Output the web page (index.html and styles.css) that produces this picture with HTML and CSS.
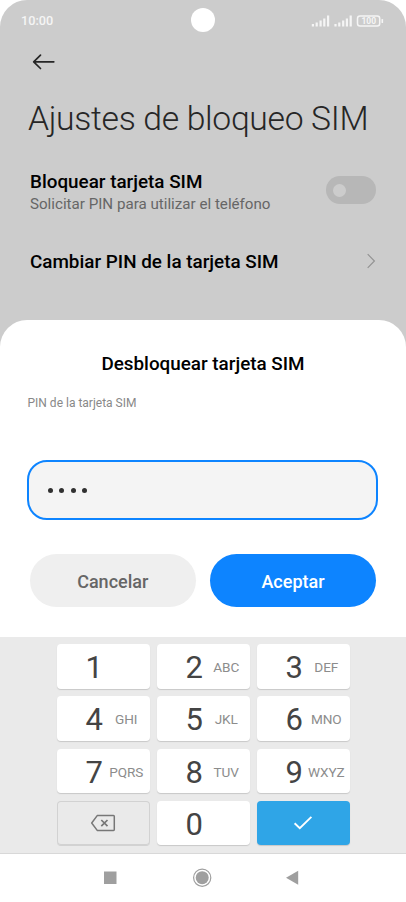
FILE: index.html
```html
<!DOCTYPE html>
<html lang="es">
<head>
<meta charset="utf-8">
<title>Ajustes de bloqueo SIM</title>
<link rel="stylesheet" href="styles.css">
</head>
<body>
<main class="phone">
  <section class="settings">
    <header class="status">
      <span class="clock">10:00</span>
      <span class="camera"></span>
      <svg class="indicators" width="74" height="14" viewBox="0 0 74 14">
        <g fill="#f5f5f5">
          <path d="M.8 10h2.200v2.500h-2.200zM4.600 8.500h2.200v4h-2.200zM8.500 6.500h2.200v6h-2.200zM12.200 4.500h2.200v8h-2.200zM16 1.500h2.200v11h-2.200z"/>
          <path transform="translate(22.600)" d="M.8 10h2.200v2.500h-2.200zM4.600 8.500h2.200v4h-2.200zM8.500 6.500h2.200v6h-2.200zM12.200 4.500h2.200v8h-2.200zM16 1.500h2.200v11h-2.200z"/>
          <rect x="70.500" y="5" width="1.600" height="4" rx=".6"/>
        </g>
        <rect x="46.500" y="1.900" width="22.200" height="10" rx="2.500" fill="none" stroke="#f5f5f5" stroke-width="1.500"/>
        <text x="57.800" y="10" class="charge">100</text>
      </svg>
    </header>
    <svg class="back" width="24" height="18" viewBox="0 0 24 18" fill="none" stroke="#262626" stroke-width="1.700" stroke-linecap="round" stroke-linejoin="round"><path d="M21.800 8.800H1.900M8.500 2.100L1.700 8.800l6.800 6.700"/></svg>
    <h1>Ajustes de bloqueo SIM</h1>
    <div class="row lock">
      <div>
        <h2>Bloquear tarjeta SIM</h2>
        <p>Solicitar PIN para utilizar el teléfono</p>
      </div>
      <span class="switch"></span>
    </div>
    <div class="row change">
      <h2>Cambiar PIN de la tarjeta SIM</h2>
      <svg width="10" height="16" viewBox="0 0 10 16" fill="none" stroke="#939393" stroke-width="1.200"><path d="M1.700 1.200L8.400 8l-6.700 6.800"/></svg>
    </div>
  </section>

  <section class="dialog">
    <h2 class="dialog-title">Desbloquear tarjeta SIM</h2>
    <p class="hint">PIN de la tarjeta SIM</p>
    <div class="pin"><i></i><i></i><i></i><i></i></div>
    <div class="actions">
      <button class="cancel">Cancelar</button>
      <button class="accept">Aceptar</button>
    </div>
  </section>

  <section class="keyboard">
    <div class="key"><b>1</b><span></span></div>
    <div class="key"><b>2</b><span>ABC</span></div>
    <div class="key"><b>3</b><span>DEF</span></div>
    <div class="key"><b>4</b><span>GHI</span></div>
    <div class="key"><b>5</b><span>JKL</span></div>
    <div class="key"><b>6</b><span>MNO</span></div>
    <div class="key"><b>7</b><span>PQRS</span></div>
    <div class="key"><b>8</b><span>TUV</span></div>
    <div class="key"><b>9</b><span>WXYZ</span></div>
    <div class="key erase"><svg width="26" height="18" viewBox="0 0 26 18" fill="none" stroke="#777" stroke-width="1.500"><path d="M7.200 1.600h16.300q.8 0 .8.800v13.200q0 .8-.8.800H7.200L1.700 9z" stroke-linejoin="round"/><path d="M11.300 6l6.200 6.200M17.500 6l-6.200 6.200" stroke-width="1.700"/></svg></div>
    <div class="key"><b>0</b><span></span></div>
    <div class="key done"><svg width="20" height="16" viewBox="0 0 20 16" fill="none" stroke="#fff" stroke-width="1.900"><path d="M1.600 8.300l5.200 5L18.400 1.900"/></svg></div>
  </section>

  <nav class="nav">
    <svg width="406" height="48" viewBox="0 0 406 48" fill="#9f9f9f">
      <rect x="104" y="17.500" width="12.500" height="12.500"/>
      <circle cx="202.200" cy="23.700" r="8.600" fill="none" stroke="#9f9f9f" stroke-width="1.200"/>
      <circle cx="202.200" cy="23.700" r="6.500"/>
      <path d="M286 23.700l12.200-7v14z"/>
    </svg>
  </nav>
</main>
</body>
</html>
```
FILE: styles.css
```css
* { box-sizing: border-box; margin: 0; padding: 0; }

body {
  width: 406px;
  height: 902px;
  overflow: hidden;
  background: #fff;
  font-family: Roboto, sans-serif;
}

.phone { display: flex; flex-direction: column; height: 902px; }

.settings {
  height: 350px;
  flex: none;
  background: #ccc;
  border-radius: 27px 27px 0 0;
}

.status {
  display: grid;
  grid-template-columns: 1fr 24px 1fr;
  align-items: center;
  height: 40px;
  padding: 0 21px;
}
.clock { color: #f5f5f5; font-size: 12.700px; font-weight: 500; line-height: 16px; padding-top: 2px; }
.camera { width: 24px; height: 24px; border-radius: 50%; background: #fff; }
.indicators { justify-self: end; margin-top: 1px; }
.charge { fill: #f5f5f5; font-size: 8.500px; font-weight: 700; text-anchor: middle; }

.back { display: block; margin: 13px 0 0 32px; }

h1 {
  margin: 26px 0 0 28px;
  color: #262626;
  font-size: 33.700px;
  font-weight: 300;
  letter-spacing: -.32px;
  line-height: 43px;
  white-space: nowrap;
}
h2 { color: #000; font-size: 18.850px; font-weight: 500; line-height: 24px; white-space: nowrap; }

.row { display: flex; justify-content: space-between; align-items: center; padding: 0 30px; }
.lock { margin-top: 29px; height: 46px; }
.lock p { color: #666; font-size: 15.150px; line-height: 21px; white-space: nowrap; }
.switch {
  display: flex;
  align-items: center;
  width: 50.500px;
  height: 28px;
  padding-left: 7.500px;
  border-radius: 14px;
  background: #b7b7b7;
  margin-top: -4px;
}
.switch::before { content: ""; width: 13px; height: 13px; border-radius: 50%; background: #ccc; }
.change { margin-top: 34px; height: 24px; }
.change h2 { padding-top: 1px; }

.dialog {
  flex: none;
  height: 317px;
  margin-top: -30px;
  padding: 32px 30px 0;
  border-radius: 27px 27px 0 0;
  background: #fff;
}
.dialog-title { text-align: center; }
.hint { margin: 19px 0 0 -2.500px; color: #888; font-size: 12px; line-height: 16px; }
.pin {
  display: flex;
  align-items: center;
  gap: 6.300px;
  width: 351px;
  height: 60px;
  margin: 49.400px 0 0 -2.600px;
  padding-left: 18.600px;
  border: 2px solid #0d84ff;
  border-radius: 20px;
  background: #f4f4f4;
}
.pin i { width: 5px; height: 5px; border-radius: 50%; background: #303030; }
.actions { display: flex; justify-content: space-between; margin-top: 34px; }
button {
  width: 165.500px;
  height: 52.500px;
  padding-top: 1px;
  border: 0;
  border-radius: 27px;
  font: 500 18px/53px Roboto, sans-serif;
}
.accept { width: 166px; }
.cancel { background: #efefef; color: #666; }
.accept { background: #0d84ff; color: #fff; }

.keyboard {
  flex: none;
  display: grid;
  grid-template-columns: repeat(3, 93px);
  grid-template-rows: repeat(4, 44.500px);
  justify-content: center;
  gap: 7.800px 7px;
  height: 217px;
  padding: 7px 0 0;
  background: #eaeaea;
  border-bottom: 1px solid #d8d8d8;
}
.key {
  display: grid;
  grid-template-columns: 46.500px 46.500px;
  align-items: center;
  border-radius: 4px;
  background: #fff;
  box-shadow: 0 1px 1px #c8c8c8;
}
.key b { color: #444; font-size: 31px; font-weight: 400; text-align: right; line-height: 44px; padding-top: 2px; }
.key span { color: #8c8c8c; font-size: 13.600px; letter-spacing: -.1px; text-align: center; }
.erase, .done { display: flex; justify-content: center; }
.erase { background: #eaeaea; box-shadow: inset 0 0 0 1px #d2d2d2, 0 1px 0 #d2d2d2; }
.done { background: #2fa5e7; }
.nav { flex: none; height: 48px; }
.nav svg { display: block; }
```
